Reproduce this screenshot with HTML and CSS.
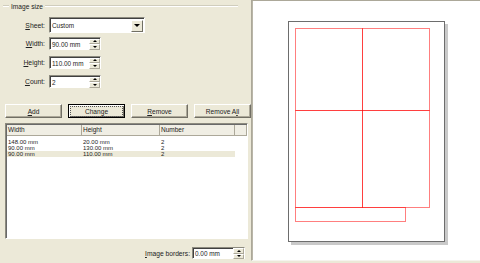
FILE: index.html
```html
<!DOCTYPE html>
<html>

<head>
    <meta charset='UTF-8'>
    <title>Image size</title>
    <link rel="stylesheet" href="styles.css">
</head>

<body>
    <div class='dialog'>
        <div class='settings'>
            <div class='group-title'><span>Image size</span></div>

            <!-- Sheet and image size fields -->
            <div class='fields'>
                <div class='field-row combo-row'>
                    <label class='field-label'><u>S</u>heet:</label>
                    <div class='combo'>
                        <span class='combo-text'>Custom</span>
                        <span class='combo-button'><span class='arrow-down big'></span></span>
                    </div>
                </div>
                <div class='field-row'>
                    <label class='field-label'><u>W</u>idth:</label>
                    <div class='spin'>
                        <span class='spin-text'>90.00 mm</span>
                        <span class='spin-buttons'>
                            <span class='spin-btn'><span class='arrow-up'></span></span>
                            <span class='spin-btn'><span class='arrow-down'></span></span>
                        </span>
                    </div>
                </div>
                <div class='field-row'>
                    <label class='field-label'><u>H</u>eight:</label>
                    <div class='spin'>
                        <span class='spin-text'>110.00 mm</span>
                        <span class='spin-buttons'>
                            <span class='spin-btn'><span class='arrow-up'></span></span>
                            <span class='spin-btn'><span class='arrow-down'></span></span>
                        </span>
                    </div>
                </div>
                <div class='field-row'>
                    <label class='field-label'><u>C</u>ount:</label>
                    <div class='spin'>
                        <span class='spin-text'>2</span>
                        <span class='spin-buttons'>
                            <span class='spin-btn'><span class='arrow-up'></span></span>
                            <span class='spin-btn'><span class='arrow-down'></span></span>
                        </span>
                    </div>
                </div>
            </div>

            <div class='buttons'>
                <button class='btn'><u>A</u>dd</button>
                <button class='btn default'><span class='focus'>Chan<u>g</u>e</span></button>
                <button class='btn'><u>R</u>emove</button>
                <button class='btn'>Remove A<u>l</u>l</button>
            </div>

            <!-- Image list -->
            <div class='list'>
                <div class='list-header'>
                    <div class='col-head'>Width</div>
                    <div class='col-head'>Height</div>
                    <div class='col-head'>Number</div>
                    <div class='col-head last'></div>
                </div>
                <div class='list-row'><span>148.00 mm</span><span>20.00 mm</span><span>2</span></div>
                <div class='list-row'><span>90.00 mm</span><span>130.00 mm</span><span>2</span></div>
                <div class='list-row selected'><span>90.00 mm</span><span>110.00 mm</span><span>2</span></div>
            </div>

            <div class='borders-row'>
                <label class='borders-label'><u>I</u>mage borders:</label>
                <div class='spin'>
                    <span class='spin-text'>0.00 mm</span>
                    <span class='spin-buttons'>
                        <span class='spin-btn'><span class='arrow-up'></span></span>
                        <span class='spin-btn'><span class='arrow-down'></span></span>
                    </span>
                </div>
            </div>
        </div>

        <!-- Page preview -->
        <div class='preview'>
            <svg class='preview-canvas' viewBox='252 1 228 259' width='228' height='259'>
                <rect x='291' y='24' width='157' height='221' fill='#c9c9c9' />
                <rect x='288.5' y='21.5' width='156' height='220' fill='#ffffff' stroke='#6d6d6d' />
                <g fill='none' stroke='rgba(255,0,0,0.5)'>
                    <rect x='295.5' y='28.5' width='67' height='82' />
                    <rect x='362.5' y='28.5' width='67' height='82' />
                    <rect x='295.5' y='110.5' width='67' height='97' />
                    <rect x='362.5' y='110.5' width='67' height='97' />
                    <rect x='295.5' y='207.5' width='110' height='14' />
                </g>
            </svg>
        </div>
    </div>
</body>

</html>
```

FILE: styles.css
```css
:root {
    --face: #ece9d8;
    --shadow: #aca899;
    --dark: #716f64;
    --text: #222;
}

body {
    margin: 0;
    background-color: var(--face);
    font-family: "Liberation Sans", Arial, sans-serif;
    color: var(--text);
    overflow: hidden;
}

.dialog {
    display: flex;
    width: 480px;
    height: 263px;
}

.settings {
    width: 251px;
    flex: none;
    display: flex;
    flex-direction: column;
}

/* etched group title */
.group-title {
    display: flex;
    align-items: center;
    height: 12px;
    margin: 0 13px 0 3px;
    font-size: 6.6px;
}

.group-title::before,
.group-title::after {
    content: '';
    border-top: 1px solid #d0cdbd;
    border-bottom: 1px solid #fff;
}

.group-title::before {
    width: 6px;
}

.group-title::after {
    flex: 1;
}

.group-title span {
    padding: 0 2px;
}

.fields {
    margin-top: 5px;
    display: flex;
    flex-direction: column;
    gap: 6px;
}

.field-row {
    display: flex;
    align-items: center;
}

.field-row.combo-row {
    margin-bottom: -2px;
}

.field-label {
    width: 45px;
    margin-right: 4px;
    text-align: right;
    font-size: 6.8px;
}

.combo,
.spin {
    display: flex;
    align-items: center;
    box-sizing: border-box;
    background: #fff;
    border: 1px solid;
    border-color: #8d8b7f #fff #fff #8d8b7f;
    box-shadow: inset 1px 1px 0 #404040;
}

.combo {
    width: 96px;
    height: 16px;
    padding: 1px 1px 0 2px;
}

.combo-text {
    flex: 1;
    font-size: 6.4px;
}

.combo-button {
    width: 12px;
    height: 12px;
    display: flex;
    align-items: center;
    justify-content: center;
    background: var(--face);
    border: 1px solid;
    border-color: #fff var(--dark) var(--dark) #fff;
    box-sizing: border-box;
}

.spin {
    width: 52px;
    height: 13px;
    padding: 1px 0 0 2px;
}

.spin-text {
    flex: 1;
    font-size: 6.4px;
}

.spin-buttons {
    width: 11px;
    height: 11px;
    display: flex;
    flex-direction: column;
}

.spin-btn {
    flex: 1;
    display: flex;
    align-items: center;
    justify-content: center;
    background: var(--face);
    border: 1px solid;
    border-color: #fff var(--shadow) var(--shadow) #fff;
    box-sizing: border-box;
}

.arrow-up,
.arrow-down {
    width: 0;
    height: 0;
    border-left: 2px solid transparent;
    border-right: 2px solid transparent;
}

.arrow-up {
    border-bottom: 2px solid #000;
}

.arrow-down {
    border-top: 2px solid #000;
}

.arrow-down.big {
    border-left-width: 3px;
    border-right-width: 3px;
    border-top-width: 3px;
}

.buttons {
    display: grid;
    grid-template-columns: repeat(4, 57px);
    column-gap: 6px;
    margin: 16px 0 0 5px;
}

.btn {
    height: 14px;
    padding: 0;
    font-family: inherit;
    font-size: 6.6px;
    color: var(--text);
    background: var(--face);
    border: 1px solid;
    border-color: #fff var(--dark) var(--dark) #fff;
    box-shadow: inset -1px -1px 0 var(--shadow);
}

.btn.default {
    border: 1px solid #000;
    box-shadow: inset 1px 1px 0 #fff, inset -1px -1px 0 var(--dark);
}

.btn .focus {
    display: block;
    margin: 1px 2px;
    line-height: 9px;
    outline: 1px dotted #555;
    outline-offset: 0;
}

.list {
    margin: 5px 3px 0 5px;
    height: 116px;
    box-sizing: border-box;
    background: #fff;
    border: 1px solid;
    border-color: #8d8b7f #fff #fff #8d8b7f;
    box-shadow: inset 1px 1px 0 #696969;
    padding: 1px 0 0 1px;
}

.list-header {
    display: grid;
    grid-template-columns: 75px 78px 75px 12px;
    height: 10px;
    background: #f0eee4;
    border-bottom: 1px solid var(--shadow);
    margin-bottom: 3px;
}

.col-head {
    border-right: 1px solid var(--shadow);
    padding-left: 1px;
    font-size: 6.5px;
    line-height: 10px;
}

.list-row {
    display: grid;
    grid-template-columns: 75px 78px 75px;
    width: 228px;
    height: 6px;
    line-height: 6px;
    font-size: 6px;
}

.list-row span {
    padding-left: 1px;
}

.list-row.selected {
    background: var(--face);
}

.borders-row {
    display: flex;
    align-items: center;
    justify-content: flex-end;
    margin: 8px 6px 0 0;
}

.borders-label {
    margin-right: 2px;
    font-size: 6.7px;
}

.borders-row .spin {
    width: 53px;
    height: 12px;
}

.preview {
    width: 230px;
    height: 261px;
    flex: none;
    box-sizing: border-box;
    background: #fff;
    border: 1px solid;
    border-color: #aca899 #f5f4ee #f5f4ee #aca899;
    box-shadow: inset 1px 0 0 #b9b6a8;
}

.preview-canvas {
    display: block;
}
```
